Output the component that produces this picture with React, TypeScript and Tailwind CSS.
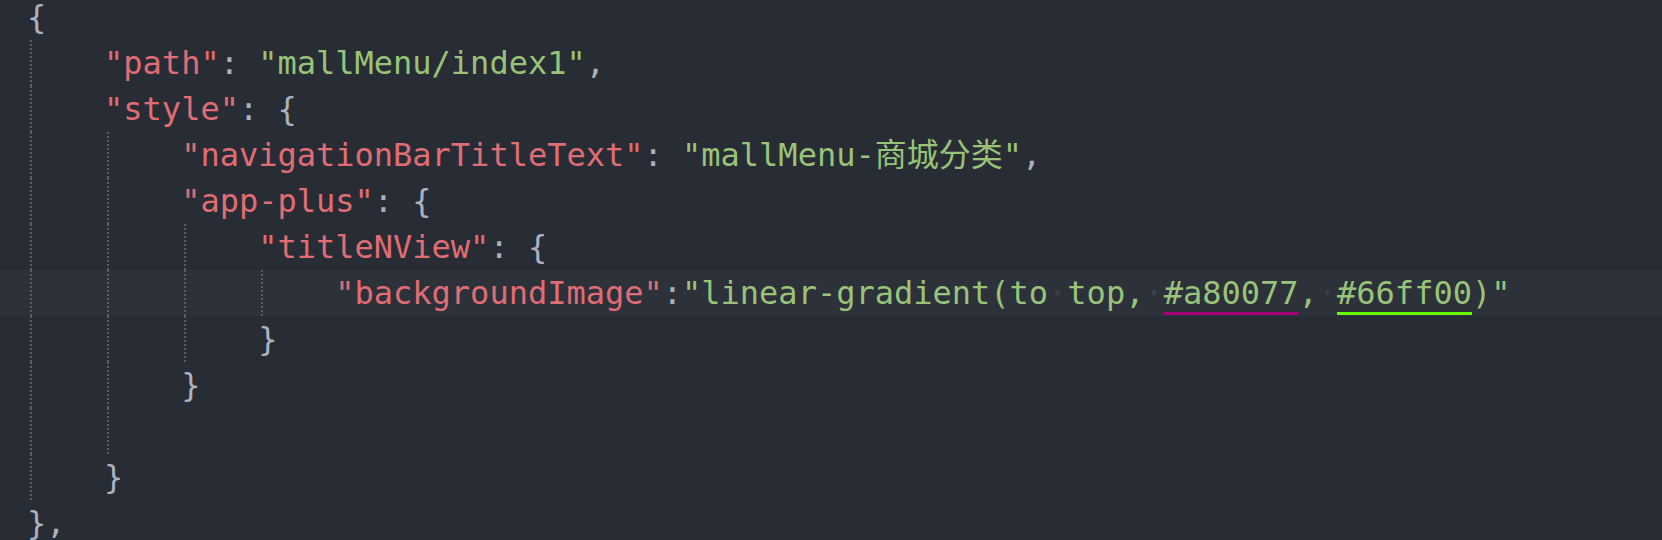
type Tok = { t: string; c: 'k' | 's' | 'p' | 'dot' | 'u1' | 'u2' };

const color: Record<string, string> = {
  k: 'text-[#e06c75]',
  s: 'text-[#98c379]',
  p: 'text-[#abb2bf]',
  dot: 'text-[#3b404a]',
  u1: 'text-[#98c379] underline decoration-[#a80077] decoration-[3px] underline-offset-[8px]',
  u2: 'text-[#98c379] underline decoration-[#66ff00] decoration-[3px] underline-offset-[8px]',
};

const lines: { guides: number; toks: Tok[]; active?: boolean }[] = [
  { guides: 0, toks: [{ t: '{', c: 'p' }] },
  { guides: 1, toks: [{ t: '"path"', c: 'k' }, { t: ': ', c: 'p' }, { t: '"mallMenu/index1"', c: 's' }, { t: ',', c: 'p' }] },
  { guides: 1, toks: [{ t: '"style"', c: 'k' }, { t: ': {', c: 'p' }] },
  { guides: 2, toks: [{ t: '"navigationBarTitleText"', c: 'k' }, { t: ': ', c: 'p' }, { t: '"mallMenu-商城分类"', c: 's' }, { t: ',', c: 'p' }] },
  { guides: 2, toks: [{ t: '"app-plus"', c: 'k' }, { t: ': {', c: 'p' }] },
  { guides: 3, toks: [{ t: '"titleNView"', c: 'k' }, { t: ': {', c: 'p' }] },
  {
    guides: 4,
    active: true,
    toks: [
      { t: '"backgroundImage"', c: 'k' },
      { t: ':', c: 'p' },
      { t: '"linear-gradient(to', c: 's' },
      { t: '·', c: 'dot' },
      { t: 'top,', c: 's' },
      { t: '·', c: 'dot' },
      { t: '#a80077', c: 'u1' },
      { t: ',', c: 's' },
      { t: '·', c: 'dot' },
      { t: '#66ff00', c: 'u2' },
      { t: ')"', c: 's' },
    ],
  },
  { guides: 3, toks: [{ t: '}', c: 'p' }] },
  { guides: 2, toks: [{ t: '}', c: 'p' }] },
  { guides: 2, toks: [] },
  { guides: 1, toks: [{ t: '}', c: 'p' }] },
  { guides: 0, toks: [{ t: '},', c: 'p' }] },
];

const App = () => {
  return (
    <div className="w-[1662px] h-[540px] overflow-hidden bg-[#282c34]">
      <div className="-mt-[6px] font-['DejaVu_Sans_Mono','Noto_Sans_CJK_SC',monospace] text-[32px] leading-[46px]">
        {lines.map((line, i) => (
          <div key={i} className={`flex h-[46px] pl-[27px] whitespace-pre ${line.active ? 'bg-[#2c313a]' : ''}`}>
            {/* indent guides, dotted */}
            {Array.from({ length: line.guides }).map((_, g) => (
              <span
                key={g}
                className="w-[4ch] h-full bg-[linear-gradient(#565d6b_2px,transparent_2px)] bg-[length:2px_4px] bg-repeat-y bg-[position:3px_0]"
              />
            ))}
            <span>
              {line.toks.map((tok, j) => (
                <span key={j} className={color[tok.c]}>
                  {tok.t}
                </span>
              ))}
            </span>
          </div>
        ))}
      </div>
    </div>
  );
};

export default App;
